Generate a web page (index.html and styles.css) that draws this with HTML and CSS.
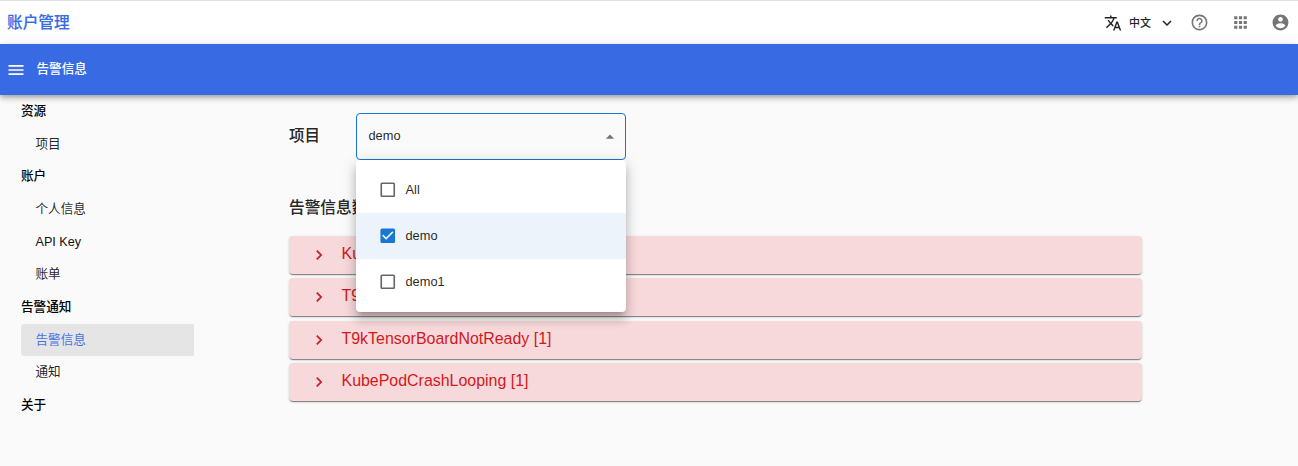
FILE: index.html
```html
<!DOCTYPE html>
<html lang="zh-CN">
<head>
<meta charset="utf-8">
<title>账户管理</title>
<link rel="stylesheet" href="styles.css">
</head>
<body>
<header class="topbar">
  <div class="brand">账户管理</div>
  <div class="tools">
    <svg class="icon translate" viewBox="0 0 24 24"><path d="M12.87 15.07l-2.54-2.51.03-.03c1.74-1.94 2.98-4.17 3.71-6.53H17V4h-7V2H8v2H1v1.99h11.17C11.5 7.92 10.44 9.75 9 11.35 8.07 10.32 7.3 9.19 6.69 8h-2c.73 1.63 1.73 3.17 2.98 4.56l-5.09 5.02L4 19l5-5 3.11 3.11.76-2.04zM18.5 10h-2L12 22h2l1.12-3h4.75L21 22h2l-4.5-12zm-2.62 7l1.62-4.33L19.12 17h-3.24z"/></svg>
    <span class="lang">中文</span>
    <svg class="icon chevron" viewBox="0 0 24 24"><path d="M7.41 8.59 12 13.17l4.59-4.58L18 10l-6 6-6-6z"/></svg>
    <svg class="icon help" viewBox="0 0 24 24"><path d="M11 18h2v-2h-2v2zm1-16C6.48 2 2 6.48 2 12s4.48 10 10 10 10-4.48 10-10S17.52 2 12 2zm0 18c-4.41 0-8-3.59-8-8s3.59-8 8-8 8 3.59 8 8-3.59 8-8 8zm0-14c-2.21 0-4 1.79-4 4h2c0-1.1.9-2 2-2s2 .9 2 2c0 2-3 1.75-3 5h2c0-2.25 3-2.5 3-5 0-2.21-1.79-4-4-4z"/></svg>
    <svg class="icon apps" viewBox="0 0 24 24"><path d="M4 8h4V4H4v4zm6 12h4v-4h-4v4zm-6 0h4v-4H4v4zm0-6h4v-4H4v4zm6 0h4v-4h-4v4zm6-10v4h4V4h-4zm-6 4h4V4h-4v4zm6 6h4v-4h-4v4zm0 6h4v-4h-4v4z"/></svg>
    <svg class="icon account" viewBox="0 0 24 24"><path d="M12 2C6.48 2 2 6.48 2 12s4.48 10 10 10 10-4.48 10-10S17.52 2 12 2zm0 3c1.66 0 3 1.34 3 3s-1.34 3-3 3-3-1.34-3-3 1.34-3 3-3zm0 14.2c-2.5 0-4.71-1.28-6-3.22.03-1.99 4-3.08 6-3.08 1.99 0 5.97 1.09 6 3.08-1.29 1.94-3.5 3.22-6 3.22z"/></svg>
  </div>
</header>
<div class="appbar">
  <svg class="icon menu-icon" viewBox="0 0 24 24"><path d="M3 18h18v-2H3v2zm0-5h18v-2H3v2zm0-7v2h18V6H3z"/></svg>
  <span>告警信息</span>
</div>
<div class="layout">
  <nav class="sidebar">
    <div class="group">资源</div>
    <div class="item">项目</div>
    <div class="group">账户</div>
    <div class="item">个人信息</div>
    <div class="item latin">API Key</div>
    <div class="item">账单</div>
    <div class="group">告警通知</div>
    <div class="item selected">告警信息</div>
    <div class="item">通知</div>
    <div class="group">关于</div>
  </nav>
  <main class="content">
    <div class="filter">
      <span class="label">项目</span>
      <div class="select">
        <span class="value">demo</span>
        <svg class="icon arrow" viewBox="0 0 24 24"><path d="m7 14 5-5 5 5z"/></svg>
        <div class="menu">
          <div class="option"><svg class="icon box" viewBox="0 0 24 24"><path d="M19 5v14H5V5h14m0-2H5c-1.1 0-2 .9-2 2v14c0 1.1.9 2 2 2h14c1.1 0 2-.9 2-2V5c0-1.1-.9-2-2-2z"/></svg><span>All</span></div>
          <div class="option checked"><svg class="icon box" viewBox="0 0 24 24"><path d="M19 3H5c-1.11 0-2 .9-2 2v14c0 1.1.89 2 2 2h14c1.11 0 2-.9 2-2V5c0-1.1-.89-2-2-2zm-9 14l-5-5 1.41-1.41L10 14.17l7.59-7.59L19 8l-9 9z"/></svg><span>demo</span></div>
          <div class="option"><svg class="icon box" viewBox="0 0 24 24"><path d="M19 5v14H5V5h14m0-2H5c-1.1 0-2 .9-2 2v14c0 1.1.9 2 2 2h14c1.1 0 2-.9 2-2V5c0-1.1-.9-2-2-2z"/></svg><span>demo1</span></div>
        </div>
      </div>
    </div>
    <h2 class="heading">告警信息数</h2>
    <div class="alerts">
      <div class="alert"><svg class="icon" viewBox="0 0 24 24"><path d="M10 6 8.59 7.41 13.17 12l-4.58 4.59L10 18l6-6z"/></svg><span>Ku</span></div>
      <div class="alert"><svg class="icon" viewBox="0 0 24 24"><path d="M10 6 8.59 7.41 13.17 12l-4.58 4.59L10 18l6-6z"/></svg><span>T9</span></div>
      <div class="alert"><svg class="icon" viewBox="0 0 24 24"><path d="M10 6 8.59 7.41 13.17 12l-4.58 4.59L10 18l6-6z"/></svg><span>T9kTensorBoardNotReady [1]</span></div>
      <div class="alert"><svg class="icon" viewBox="0 0 24 24"><path d="M10 6 8.59 7.41 13.17 12l-4.58 4.59L10 18l6-6z"/></svg><span>KubePodCrashLooping [1]</span></div>
    </div>
  </main>
</div>
</body>
</html>
```
FILE: styles.css
```css
* { box-sizing: border-box; }
body {
  margin: 0;
  height: 466px;
  overflow: hidden;
  background: #fafafa;
  color: rgba(0, 0, 0, 0.87);
  font-family: "Liberation Sans", "Noto Sans CJK SC", sans-serif;
  font-size: 12.8px;
}
.icon { display: block; flex: none; width: 20px; height: 20px; fill: currentColor; }
.topbar {
  height: 44px;
  border-top: 1px solid #e0e0e0;
  background: #fff;
  display: flex;
  align-items: center;
  justify-content: space-between;
  padding: 0 8px 0 7px;
}
.brand { padding-bottom: 2px; color: #386be3; font-size: 15.7px; font-weight: 500; -webkit-text-stroke: 0.15px; }
.tools { display: flex; align-items: center; color: #757575; }
.translate { width: 18px; height: 18px; color: #222; }
.lang { margin-left: 7px; padding-bottom: 1px; font-size: 11px; font-weight: 500; color: #222; }
.chevron { width: 18px; height: 18px; margin-left: 7px; color: #222; }
.help { width: 19px; height: 19px; margin-left: 14px; }
.apps { margin-left: 21.5px; width: 19px; height: 19px; }
.account { width: 19px; height: 19px; margin-left: 21.5px; }
.appbar {
  position: relative;
  height: 51px;
  display: flex;
  align-items: center;
  gap: 10.5px;
  padding: 0 6px;
  color: #fff;
  background: #386be3;
  font-size: 12.6px;
  font-weight: 500;
  box-shadow: 0 2px 4px -1px rgba(0,0,0,.2), 0 4px 5px rgba(0,0,0,.14), 0 1px 10px rgba(0,0,0,.12);
}
.appbar span { padding-bottom: 4px; }
.layout { display: flex; }
.sidebar { width: 194px; padding-left: 21px; font-size: 12.6px; }
.group, .item { height: 32.65px; display: flex; align-items: center; padding-bottom: 3.4px; }
.group { color: #000; font-weight: 500; }
.item { padding-left: 14.5px; }
.latin { padding-bottom: 0; color: #111; }
.selected {
  height: 32px;
  margin-top: .65px;
  background: #e5e5e5;
  color: #4873e6;
  border-radius: 4px 0 0 4px;
}
.content { width: 853px; margin-left: 95px; padding-top: 18px; }
.filter { display: flex; align-items: center; height: 47px; }
.label { width: 67px; padding-bottom: 5px; font-size: 15.5px; font-weight: 500; -webkit-text-stroke: 0.1px; }
.select {
  position: relative;
  width: 270px;
  height: 47px;
  display: flex;
  align-items: center;
  justify-content: space-between;
  padding: 0 5px 0 11.5px;
  border: 1px solid #1976d2;
  border-radius: 4px;
}
.value { padding-bottom: 2px; }
.arrow { color: #757575; }
.menu {
  position: absolute;
  z-index: 2;
  top: 46px;
  left: -1px;
  width: 270px;
  padding: 7px 0;
  border-radius: 4px;
  background: #fff;
  box-shadow: 0 5px 5px -3px rgba(0,0,0,.2), 0 8px 10px 1px rgba(0,0,0,.14), 0 3px 14px 2px rgba(0,0,0,.12);
}
.option { height: 46px; display: flex; align-items: center; gap: 8.5px; padding-left: 21.5px; }
.option span { padding-bottom: 1px; }
.checked { background: #edf3fb; }
.box { width: 19.5px; height: 19.5px; color: #666; }
.checked .box { color: #1976d2; }
.heading { margin: 36px 0 17px; font-size: 15.7px; line-height: 23px; font-weight: 500; -webkit-text-stroke: 0.1px; }
.alerts { display: flex; flex-direction: column; gap: 4.3px; }
.alert {
  height: 38px;
  display: flex;
  align-items: center;
  gap: 12.5px;
  padding-left: 20px;
  color: #d01820;
  font-size: 15.95px;
  background: #f8d9db;
  border-radius: 4px;
  box-shadow: 0 2px 1px -1px rgba(0,0,0,.35), 0 1px 1px rgba(0,0,0,.16), 0 1px 3px rgba(0,0,0,.12);
}
.alert span { padding-bottom: 2px; }
```
